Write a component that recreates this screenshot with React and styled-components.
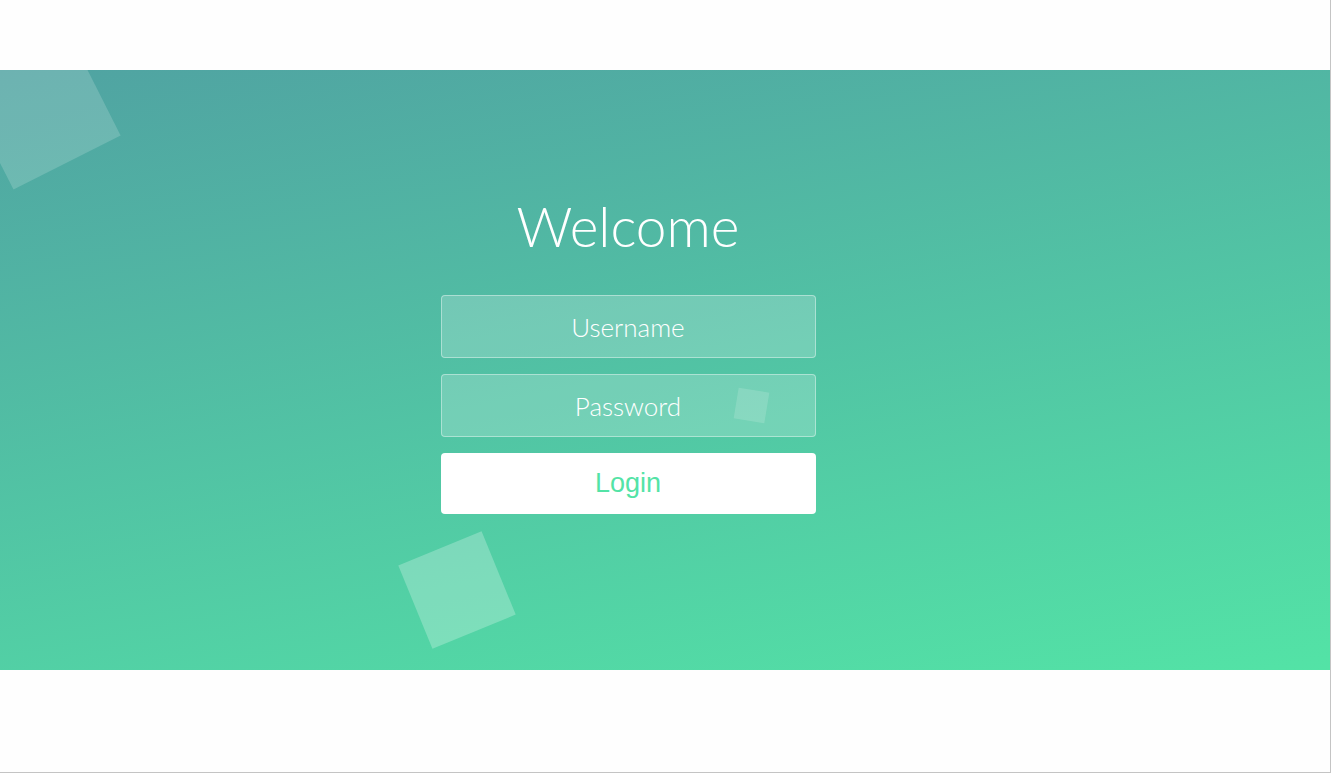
import React from "react";
import styled, { createGlobalStyle } from "styled-components";

const GlobalStyle = createGlobalStyle`
  html, body { margin: 0; padding: 0; background: #ffffff; }
  * { box-sizing: border-box; }
`;

const Frame = styled.div`
  width: 1331px;
  height: 773px;
  padding-top: 70px;
  border-right: 1px solid #c4c4c4;
  border-bottom: 1px solid #c4c4c4;
  background: #fefefe;
  display: flex;
  flex-direction: column;
`;

const Band = styled.div`
  position: relative;
  height: 600px;
  width: 100%;
  overflow: hidden;
  background: linear-gradient(169deg, #50a3a2 0%, #53e3a6 100%);
`;

const Container = styled.div`
  position: relative;
  z-index: 2;
  width: 600px;
  margin-left: 328px;
  padding-top: 119px;
  text-align: center;
`;

const Title = styled.h1`
  margin: 0;
  height: 75px;
  font-family: "Lato", "Open Sans", sans-serif;
  font-size: 55px;
  line-height: 75px;
  font-weight: 300;
  color: #ffffff;
`;

const Form = styled.form`
  padding-top: 31px;
  display: flex;
  flex-direction: column;
  align-items: center;
  gap: 16px;
`;

const Field = styled.input`
  width: 375px;
  height: 63px;
  padding: 0 22px;
  border: 1px solid rgba(255, 255, 255, 0.4);
  border-radius: 4px;
  background: rgba(255, 255, 255, 0.2);
  color: #ffffff;
  text-align: center;
  font-family: "Lato", "Open Sans", sans-serif;
  font-size: 26px;
  font-weight: 300;
  outline: none;
  &::placeholder { color: #ffffff; opacity: 1; }
`;

const Button = styled.button`
  width: 375px;
  height: 61px;
  border: 0;
  border-radius: 4px;
  background: #ffffff;
  color: #53e3a6;
  font-family: "Liberation Sans", Arial, sans-serif;
  font-size: 27px;
  cursor: pointer;
`;

const Bubble = styled.div`
  position: absolute;
  z-index: 1;
  width: ${(p) => p.$size}px;
  height: ${(p) => p.$size}px;
  left: ${(p) => p.$cx - p.$size / 2}px;
  top: ${(p) => p.$cy - p.$size / 2}px;
  transform: rotate(${(p) => p.$rot}deg);
  background: rgba(255, 255, 255, ${(p) => p.$alpha});
`;

export default function App() {
  return (
    <>
      <GlobalStyle />
      <Frame>
        <Band>
          <Bubble $size={120} $cx={39.5} $cy={38.5} $rot={-26.8} $alpha={0.17} />
          <Bubble $size={90} $cx={456.75} $cy={519.5} $rot={-22.3} $alpha={0.25} />
          <Bubble $size={31} $cx={751} $cy={335.4} $rot={9.3} $alpha={0.15} />
          <Container>
            <Title>Welcome</Title>
            <Form onSubmit={(e) => e.preventDefault()}>
              <Field type="text" placeholder="Username" />
              <Field type="password" placeholder="Password" />
              <Button type="submit">Login</Button>
            </Form>
          </Container>
        </Band>
      </Frame>
    </>
  );
}
